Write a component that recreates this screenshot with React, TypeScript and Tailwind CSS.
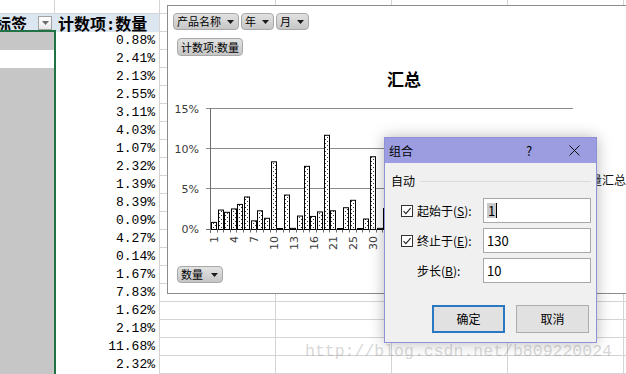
import React from "react";

const PCTS = [
  "0.88%", "2.41%", "2.13%", "2.55%", "3.11%", "4.03%", "1.07%", "2.32%", "1.39%", "8.39%",
  "0.09%", "4.27%", "0.14%", "1.67%", "7.83%", "1.62%", "2.18%", "11.68%", "2.32%",
];

// first 19 come from the table, the rest are what shows left of the dialog
const BARS = [
  0.88, 2.41, 2.13, 2.55, 3.11, 4.03, 1.07, 2.32, 1.39, 8.39, 0.09, 4.27, 0.14, 1.67, 7.83, 1.62,
  2.18, 11.68, 2.32, 0.1, 2.7, 3.62, 0.08, 1.3, 9.02, 0.14, 2.6, 5.1, 1.9, 3.3,
];

const TICKS: Record<number, string> = { 0: "1", 3: "4", 6: "7", 9: "10", 12: "13", 15: "16", 18: "21", 21: "25", 24: "30" };

const X0 = 43;
const STEP = 6.62;
const BASE = 223.5;
const PER_PCT = (223.5 - 102.5) / 15;

function GridCells() {
  return (
    <>
      <div className="w-[116px] shrink-0 border-r border-b border-[#d4d4d4]" />
      <div className="w-[116px] shrink-0 border-r border-b border-[#d4d4d4]" />
      <div className="w-[116px] shrink-0 border-r border-b border-[#d4d4d4]" />
      <div className="w-[116px] shrink-0 border-r border-b border-[#d4d4d4]" />
      <div className="flex-1 border-b border-[#d4d4d4]" />
    </>
  );
}

function Arrow() {
  return (
    <svg width="7" height="4" viewBox="0 0 7 4" className="shrink-0">
      <path d="M0 0h7L3.5 4z" fill="#1a1a1a" />
    </svg>
  );
}

function FieldButton({ label, arrow, className }: { label: string; arrow?: boolean; className: string }) {
  return (
    <div
      className={`flex items-center justify-between whitespace-nowrap rounded-[4px] border border-[#a8a8a8] bg-linear-to-b from-[#e2e2e2] to-[#c6c6c6] pl-[3px] pr-[4px] text-[11px] leading-none text-black ${className}`}
    >
      <span>{label}</span>
      {arrow && <Arrow />}
    </div>
  );
}

function Sheet() {
  return (
    <div className="flex flex-col">
      <div className="flex h-[14px]">
        <div className="w-[55px] shrink-0 border-r border-b border-[#d4d4d4]" />
        <div className="w-[105px] shrink-0 border-r border-b border-[#d4d4d4]" />
        <GridCells />
      </div>
      <div className="flex h-[18px]">
        <div className="flex w-[55px] shrink-0 items-center overflow-hidden bg-[#dce6f1]">
          <span className="ml-[-21px] shrink-0 whitespace-nowrap text-[16px] font-bold leading-none">行标签</span>
          <div className="ml-auto mr-[3px] flex h-[14px] w-[14px] items-center justify-center border border-[#a3a3a3] bg-linear-to-b from-white to-[#e9e9e9]">
            <svg width="7" height="4" viewBox="0 0 7 4">
              <path d="M0 0h7L3.5 4z" fill="#6d6d6d" />
            </svg>
          </div>
        </div>
        <div className="flex w-[105px] shrink-0 items-center border-r border-[#d4d4d4] bg-[#dce6f1] pl-[3px] text-[16px] font-bold leading-none">
          计数项<span className="px-[2px]">:</span>数量
        </div>
        <GridCells />
      </div>
      {PCTS.map((p, i) => (
        <div className="flex h-[18px]" key={i}>
          <div className={`w-[55px] shrink-0 ${i === 1 ? "bg-white" : "bg-[#c6c6c6]"}`} />
          <div className="w-[105px] shrink-0 border-r border-[#d4d4d4] pr-[4px] text-right font-['Liberation_Mono',monospace] text-[13px] leading-[18px] text-black">
            {p}
          </div>
          <GridCells />
        </div>
      ))}
    </div>
  );
}

function Plot() {
  return (
    <svg className="absolute left-0 top-0" width="520" height="287">
      <defs>
        <pattern id="dots" width="4" height="4" patternUnits="userSpaceOnUse">
          <rect width="4" height="4" fill="#fff" />
          <rect x="1" y="1" width="1" height="1" fill="#333" />
          <rect x="3" y="3" width="1" height="1" fill="#333" />
        </pattern>
      </defs>
      {[102.5, 142.5, 182.5].map((y) => (
        <line key={y} x1="38" x2="405" y1={y} y2={y} stroke="#8a8a8a" />
      ))}
      <line x1="38" x2="405" y1={BASE} y2={BASE} stroke="#6b6b6b" />
      <line x1="42.5" x2="42.5" y1="102" y2="227" stroke="#6b6b6b" />
      {["15%", "10%", "5%", "0%"].map((t, i) => (
        <text
          key={t}
          x="31"
          y={102.5 + i * 40.33 + 4}
          textAnchor="end"
          fontSize="11"
          fontFamily="DejaVu Sans, sans-serif"
          fill="#3a3a3a"
        >
          {t}
        </text>
      ))}
      {BARS.map((v, i) => {
        const x = Math.round(X0 + i * STEP) + 0.5;
        const h = Math.max(1, v * PER_PCT);
        return (
          <rect key={i} x={x} y={BASE - h} width="5" height={h} fill="url(#dots)" stroke="#000" strokeWidth="1" />
        );
      })}
      {BARS.map((_, i) => {
        const x = Math.round(X0 - 1 + i * STEP) + 0.5;
        return <line key={i} x1={x} x2={x} y1={BASE} y2={BASE + 3} stroke="#6b6b6b" />;
      })}
      {Object.entries(TICKS).map(([k, t]) => {
        const cx = X0 + Number(k) * STEP + 3.3;
        return (
          <text
            key={k}
            transform={`translate(${cx + 4},230) rotate(-90)`}
            textAnchor="end"
            fontSize="11"
            fontFamily="DejaVu Sans, sans-serif"
            fill="#3a3a3a"
          >
            {t}
          </text>
        );
      })}
      <text x="410" y="179" fontSize="12" fontFamily="Noto Sans CJK SC, sans-serif" fill="#111">
        数量汇总
      </text>
    </svg>
  );
}

function Chart() {
  return (
    <div className="absolute left-[167px] top-[5px] h-[289px] w-[520px] border border-[#8c8c8c] bg-white">
      <Plot />
      <div className="relative flex gap-[2px] pl-[5px] pt-[7px]">
        <FieldButton label="产品名称" arrow className="h-[17px] w-[66px]" />
        <FieldButton label="年" arrow className="h-[17px] w-[33px]" />
        <FieldButton label="月" arrow className="h-[17px] w-[33px]" />
      </div>
      <div className="relative ml-[9px] mt-[8px] flex">
        <FieldButton label="计数项:数量" className="h-[18px] w-[66px] pr-[2px] text-[10.5px]" />
      </div>
      <div className="absolute left-[219px] top-[64px] text-[17px] font-bold leading-[18px] text-black">汇总</div>
      <div className="absolute left-[9px] top-[260px] flex">
        <FieldButton label="数量" arrow className="h-[17px] w-[46px]" />
      </div>
    </div>
  );
}

function Check() {
  return (
    <div className="flex h-[12px] w-[12px] shrink-0 items-center justify-center border border-[#333] bg-white">
      <svg width="10" height="10" viewBox="0 0 10 10">
        <path d="M1.5 5.2l2.4 2.4L8.6 2.2" fill="none" stroke="#222" strokeWidth="1.1" />
      </svg>
    </div>
  );
}

function Field({ children }: { children: React.ReactNode }) {
  return (
    <div className="flex h-[25px] w-[108px] shrink-0 items-center border border-[#a8a8a8] bg-white pl-[3px] text-[13px] leading-none">
      {children}
    </div>
  );
}

function Dialog() {
  return (
    <div className="absolute left-[384px] top-[137px] flex h-[206px] w-[213px] flex-col border border-[#9090d6] bg-[#f0f0f0] text-[12px] text-black shadow-[0_0_14px_rgba(0,0,0,0.28)]">
      <div className="flex h-[25px] shrink-0 items-center bg-[#9c9ce0] pl-[4px]">
        <span className="leading-none">组合</span>
        <span className="ml-auto w-[8px] text-center text-[13px] leading-none">?</span>
        <svg width="11" height="11" viewBox="0 0 11 11" className="ml-[36px] mr-[16px]">
          <path d="M0.5 0.5l10 10M10.5 0.5l-10 10" stroke="#111" strokeWidth="1" />
        </svg>
      </div>
      <div className="flex flex-col">
        <div className="mt-[11px] flex h-[14px] items-center pl-[6px] pr-[5px]">
          <span className="leading-none">自动</span>
          <div className="ml-[5px] h-px flex-1 bg-[#dadada]" />
        </div>
        <div className="mt-[10px] flex flex-col gap-[5px] pl-[16px]">
          <div className="flex h-[25px] items-center">
            <Check />
            <span className="ml-[4px] w-[66px] leading-none">
              起始于(<u>S</u>):
            </span>
            <Field>
              <span className="bg-[#c9c9c9] px-[1px] leading-[15px]">1</span>
              <span className="h-[15px] w-px bg-black" />
            </Field>
          </div>
          <div className="flex h-[25px] items-center">
            <Check />
            <span className="ml-[4px] w-[66px] leading-none">
              终止于(<u>E</u>):
            </span>
            <Field>130</Field>
          </div>
          <div className="flex h-[25px] items-center pl-[16px]">
            <span className="w-[66px] leading-none">
              步长(<u>B</u>):
            </span>
            <Field>10</Field>
          </div>
        </div>
        <div className="ml-[47px] mt-[22px] flex gap-[11px]">
          <div className="flex h-[28px] w-[73px] items-center justify-center border-2 border-[#2a78c2] bg-[#e1e1e1] leading-none">
            确定
          </div>
          <div className="flex h-[28px] w-[73px] items-center justify-center border border-[#adadad] bg-[#e1e1e1] leading-none">
            取消
          </div>
        </div>
      </div>
    </div>
  );
}

export default function App() {
  return (
    <div className="relative h-[374px] w-[626px] overflow-hidden bg-white font-['Noto_Sans_CJK_SC','Noto_Sans',sans-serif] text-black">
      <Sheet />
      <div className="pointer-events-none absolute left-[-2px] top-[30px] h-[400px] w-[58px] border-2 border-[#217346]" />
      <Chart />
      <Dialog />
      <div className="pointer-events-none absolute left-[305px] top-[344px] whitespace-nowrap font-['Liberation_Mono',monospace] text-[16.5px] leading-none text-[rgba(140,140,140,0.36)]">
        http://blog.csdn.net/b809220024
      </div>
    </div>
  );
}
